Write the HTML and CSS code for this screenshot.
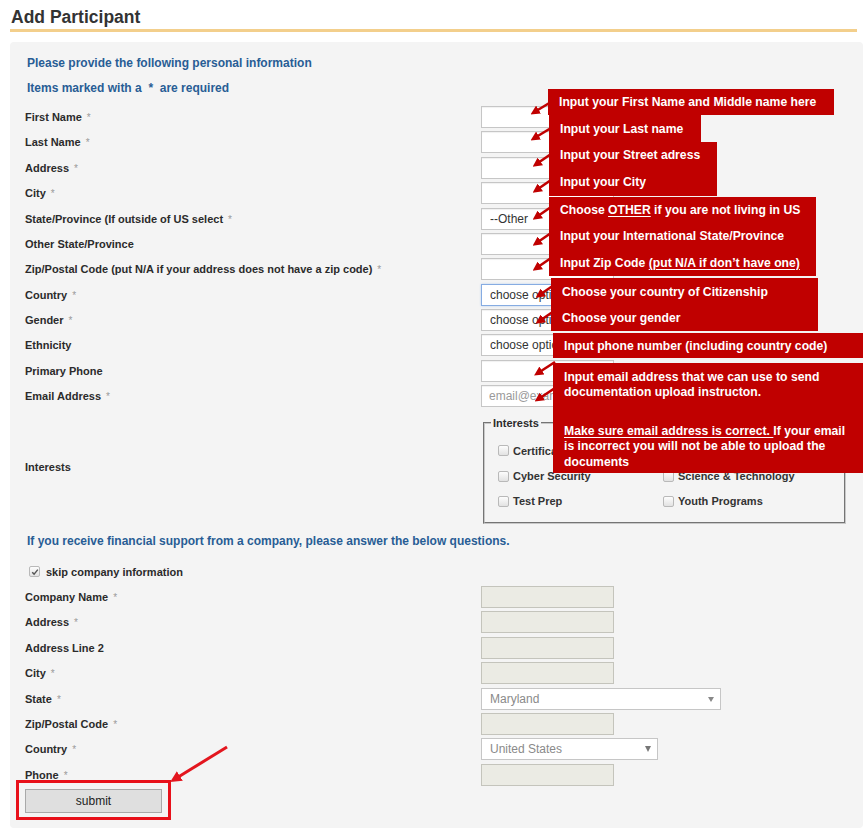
FILE: index.html
```html
<!DOCTYPE html>
<html lang="en">
<head>
<meta charset="utf-8">
<title>Add Participant</title>
<link rel="stylesheet" href="styles.css">
</head>
<body>
<div class="page">
  <h1 class="title">Add Participant</h1>
  <form class="panel">
    <p class="intro">Please provide the following personal information</p>
    <p class="intro">Items marked with a &nbsp;*&nbsp; are required</p>

    <div class="rows personal">
      <div class="row"><label class="lbl">First Name<span class="req">*</span></label><input class="field" type="text"></div>
      <div class="row"><label class="lbl">Last Name<span class="req">*</span></label><input class="field" type="text"></div>
      <div class="row"><label class="lbl">Address<span class="req">*</span></label><input class="field" type="text"></div>
      <div class="row"><label class="lbl">City<span class="req">*</span></label><input class="field" type="text"></div>
      <div class="row"><label class="lbl">State/Province (If outside of US select<span class="req">*</span></label><select class="field sel-plain"><option>--Other</option></select></div>
      <div class="row"><label class="lbl">Other State/Province</label><input class="field" type="text"></div>
      <div class="row"><label class="lbl">Zip/Postal Code (put N/A if your address does not have a zip code)<span class="req">*</span></label><input class="field" type="text"></div>
      <div class="row"><label class="lbl">Country<span class="req">*</span></label><select class="field sel-plain focus"><option>choose option</option></select></div>
      <div class="row"><label class="lbl">Gender<span class="req">*</span></label><select class="field sel-plain"><option>choose option</option></select></div>
      <div class="row"><label class="lbl">Ethnicity</label><select class="field sel-plain"><option>choose option</option></select></div>
      <div class="row"><label class="lbl">Primary Phone</label><input class="field" type="text"></div>
      <div class="row"><label class="lbl">Email Address<span class="req">*</span></label><input class="field" type="text" placeholder="email@example.com"></div>
    </div>

    <div class="row interests">
      <div class="lbl ilbl">Interests</div>
      <fieldset class="ibox">
        <legend>Interests</legend>
        <div class="igrid">
          <label class="chk"><span class="box"></span>Certification Programs</label>
          <label class="chk"><span class="box"></span>Professional Development</label>
          <label class="chk"><span class="box"></span>Cyber Security</label>
          <label class="chk"><span class="box"></span>Science &amp; Technology</label>
          <label class="chk"><span class="box"></span>Test Prep</label>
          <label class="chk"><span class="box"></span>Youth Programs</label>
        </div>
      </fieldset>
    </div>

    <p class="intro fin">If you receive financial support from a company, please answer the below questions.</p>
    <div class="skip"><span class="box checked"><svg width="8" height="8" viewBox="0 0 8 8"><path d="M1.2 4.2 L3.1 6.1 L6.8 1.6" fill="none" stroke="#555" stroke-width="1.4"/></svg></span>skip company information</div>

    <div class="rows company">
      <div class="row"><label class="lbl">Company Name<span class="req">*</span></label><input class="field off" type="text" disabled></div>
      <div class="row"><label class="lbl">Address<span class="req">*</span></label><input class="field off" type="text" disabled></div>
      <div class="row"><label class="lbl">Address Line 2</label><input class="field off" type="text" disabled></div>
      <div class="row"><label class="lbl">City<span class="req">*</span></label><input class="field off" type="text" disabled></div>
      <div class="row"><label class="lbl">State<span class="req">*</span></label><div class="sel sel-state"><select class="field dsel" disabled><option>Maryland</option></select></div></div>
      <div class="row"><label class="lbl">Zip/Postal Code<span class="req">*</span></label><input class="field off" type="text" disabled></div>
      <div class="row"><label class="lbl">Country<span class="req">*</span></label><div class="sel sel-country"><select class="field dsel" disabled><option>United States</option></select></div></div>
      <div class="row"><label class="lbl">Phone<span class="req">*</span></label><input class="field off" type="text" disabled></div>
    </div>

    <div class="actions"><button class="submit" type="button">submit</button></div>
  </form>
</div>

<div class="notes">
  <div class="note n1">Input your First Name and Middle name here</div>
  <div class="note n2">Input your Last name</div>
  <div class="note n3">Input your Street adress</div>
  <div class="note n4">Input your City</div>
  <div class="note n5">Choose&nbsp;<u>OTHER</u>&nbsp;if you are not living in US</div>
  <div class="note n6">Input your International State/Province</div>
  <div class="note n7">Input Zip Code&nbsp;<u>(put N/A if don’t have one)</u></div>
  <div class="note n8">Choose your country of Citizenship</div>
  <div class="note n9">Choose your gender</div>
  <div class="note n10">Input phone number (including country code)</div>
  <div class="note n11">
    <span class="ln">Input email address that we can use to send</span>
    <span class="ln">documentation upload instructon.</span>
    <span class="ln gap"><u>Make sure email address is correct. </u>If your email</span>
    <span class="ln">is incorrect you will not be able to upload the</span>
    <span class="ln">documents</span>
  </div>
  <div class="redbox"></div>
  <svg class="arrows" width="868" height="837" viewBox="0 0 868 837">
    <defs>
      <marker id="h" viewBox="0 0 10 10" refX="5" refY="5" markerWidth="3.6" markerHeight="3.6" orient="auto">
        <path d="M0,0 L10,5 L0,10 z" fill="#c00000"/>
      </marker>
      <marker id="hb" viewBox="0 0 10 10" refX="5" refY="5" markerWidth="3.8" markerHeight="3.8" orient="auto">
        <path d="M0,0 L10,5 L0,10 z" fill="#e3161e"/>
      </marker>
    </defs>
    <g stroke="#c00000" stroke-width="2.6" fill="none" marker-end="url(#h)">
      <line x1="551" y1="102" x2="534.5" y2="112"/>
      <line x1="551" y1="128" x2="534.5" y2="138"/>
      <line x1="551" y1="154" x2="536.5" y2="164"/>
      <line x1="551" y1="180" x2="536.5" y2="190"/>
      <line x1="551" y1="207" x2="536.5" y2="217"/>
      <line x1="551" y1="233" x2="536.5" y2="243"/>
      <line x1="551" y1="258" x2="536.5" y2="268"/>
      <line x1="554" y1="285" x2="539.5" y2="295"/>
      <line x1="554" y1="311" x2="539.5" y2="321"/>
      <line x1="555" y1="362" x2="538" y2="373"/>
      <line x1="555" y1="388" x2="538.5" y2="399"/>
    </g>
    <line x1="227" y1="747" x2="175" y2="779" stroke="#e3161e" stroke-width="3" marker-end="url(#hb)"/>
  </svg>
</div>
</body>
</html>
```
FILE: styles.css
```css
* { box-sizing: border-box; }

body {
  margin: 0;
  font-family: "Liberation Sans", Arial, sans-serif;
  color: #2b2b2b;
  background: #fff;
}

.page {
  width: 868px;
  padding: 0 5px 0 10px;
}

.title {
  width: 847px;
  margin: 0;
  padding: 7px 0 2px 1px;
  font-size: 17.5px;
  line-height: 20px;
  font-weight: bold;
  color: #333;
  border-bottom: 3px solid #f3cf8c;
}

.panel {
  margin: 10px 0 0 0;
  width: 853px;
  background: #f4f4f4;
  border-radius: 4px;
  padding: 8.5px 0 15px 15px;
}

.intro {
  margin: 0;
  padding-left: 2px;
  height: 25.4px;
  line-height: 25.4px;
  font-size: 12px;
  font-weight: bold;
  color: #285d95;
}

.personal { margin-top: 3px; }

.row {
  display: flex;
  align-items: center;
  height: 25.4px;
}

.lbl {
  width: 456px;
  flex: none;
  font-size: 11px;
  font-weight: bold;
  color: #2b2b2b;
}

.req {
  margin-left: 5px;
  font-weight: normal;
  color: #9a9a9a;
  font-size: 10px;
}

.field {
  width: 133px;
  height: 22px;
  margin: 0;
  padding: 0 7px;
  border: 1px solid #c6c6c6;
  border-radius: 0;
  background: #fff;
  font-family: "Liberation Sans", Arial, sans-serif;
  font-size: 12px;
  color: #333;
  box-shadow: inset 0 1px 1px rgba(0, 0, 0, 0.06);
  outline: none;
}

.field::placeholder { color: #9a9a9a; }

.sel-plain {
  -webkit-appearance: none;
  appearance: none;
  padding-left: 8px;
}

.sel-plain.focus {
  border-color: #86ace2;
  box-shadow: 0 0 2px #b9d0f0;
}

.off {
  background: #ebebe4;
  border-color: #c4c4bc;
  box-shadow: none;
}

.sel { position: relative; }

.sel .dsel {
  -webkit-appearance: none;
  appearance: none;
  width: 100%;
  padding-left: 8px;
  background: #fff;
  color: #8a8a8a;
  opacity: 1;
  box-shadow: none;
}

.sel::after {
  content: "";
  position: absolute;
  top: 9px;
  right: 7px;
  border-left: 3px solid transparent;
  border-right: 3px solid transparent;
  border-top: 5px solid #888;
}

.sel-state { width: 240px; }
.sel-country { width: 177px; }
.sel-country::after { right: 7px; border-top-color: #777; border-left-width: 3.5px; border-right-width: 3.5px; border-top-width: 6px; top: 8px; }

.interests {
  height: auto;
  padding-top: 8px;
}

.ilbl { margin-bottom: 7px; }

.ibox {
  margin: 0 0 0 2px;
  width: 363px;
  height: 107px;
  padding: 0;
  border: 2px groove #c8c8c8;
}

.ibox legend {
  margin-left: 6px;
  padding: 0 2px;
  font-size: 11px;
  line-height: 13px;
  font-weight: bold;
  color: #2b2b2b;
}

.igrid {
  display: grid;
  grid-template-columns: 165px 1fr;
  grid-auto-rows: 25.4px;
  padding: 8px 0 0 13px;
}

.chk {
  display: flex;
  align-items: center;
  font-size: 11px;
  font-weight: bold;
  color: #333;
  white-space: nowrap;
}

.box {
  display: inline-flex;
  align-items: center;
  justify-content: center;
  width: 11px;
  height: 11px;
  margin-right: 4px;
  border: 1px solid #b9b9b9;
  border-radius: 2px;
  background: linear-gradient(#fdfdfd, #e2e2e2);
  flex: none;
}

.fin { margin-top: 5.5px; }

.skip {
  display: flex;
  align-items: center;
  height: 25px;
  margin-top: 4.5px;
  font-size: 11px;
  font-weight: bold;
  color: #2b2b2b;
}

.skip .box {
  margin-left: 4px;
  margin-right: 6px;
}

.actions { margin-top: 1.4px; }

.submit {
  width: 137px;
  height: 24px;
  margin: 0;
  padding: 0;
  border: 1px solid #a9a9a9;
  border-radius: 0;
  background: #dfdfdf;
  font-family: "Liberation Sans", Arial, sans-serif;
  font-size: 12px;
  color: #222;
}

/* annotation overlay */
.notes {
  position: absolute;
  left: 0;
  top: 0;
  width: 868px;
  height: 837px;
  pointer-events: none;
}

.note {
  position: absolute;
  display: flex;
  align-items: center;
  padding-left: 11px;
  background: #c00000;
  color: #fff;
  font-size: 12.2px;
  font-weight: bold;
  white-space: nowrap;
}

.note u { text-decoration-thickness: 1px; text-underline-offset: 2px; }

.n1 { left: 548px; top: 89px; width: 286px; height: 26px; }
.n2 { left: 549px; top: 115px; width: 152px; height: 27px; }
.n3 { left: 549px; top: 142px; width: 168px; height: 26px; }
.n4 { left: 549px; top: 168px; width: 168px; height: 28px; }
.n5 { left: 549px; top: 197px; width: 267px; height: 26px; }
.n6 { left: 549px; top: 223px; width: 267px; height: 26px; }
.n7 { left: 549px; top: 249px; width: 267px; height: 27px; }
.n8 { left: 551px; top: 278px; width: 267px; height: 27px; }
.n9 { left: 551px; top: 305px; width: 267px; height: 26px; }
.n10 { left: 553px; top: 333px; width: 310px; height: 25px; }

.n11 {
  left: 553px;
  top: 363px;
  width: 310px;
  height: 110px;
  flex-direction: column;
  align-items: flex-start;
  justify-content: flex-start;
  padding-top: 6.8px;
}

.ln {
  display: block;
  line-height: 15.5px;
}

.ln.gap { margin-top: 23px; }

.redbox {
  position: absolute;
  left: 16px;
  top: 780px;
  width: 155px;
  height: 40px;
  border: 3.5px solid #e8101a;
}

.arrows {
  position: absolute;
  left: 0;
  top: 0;
}
```
